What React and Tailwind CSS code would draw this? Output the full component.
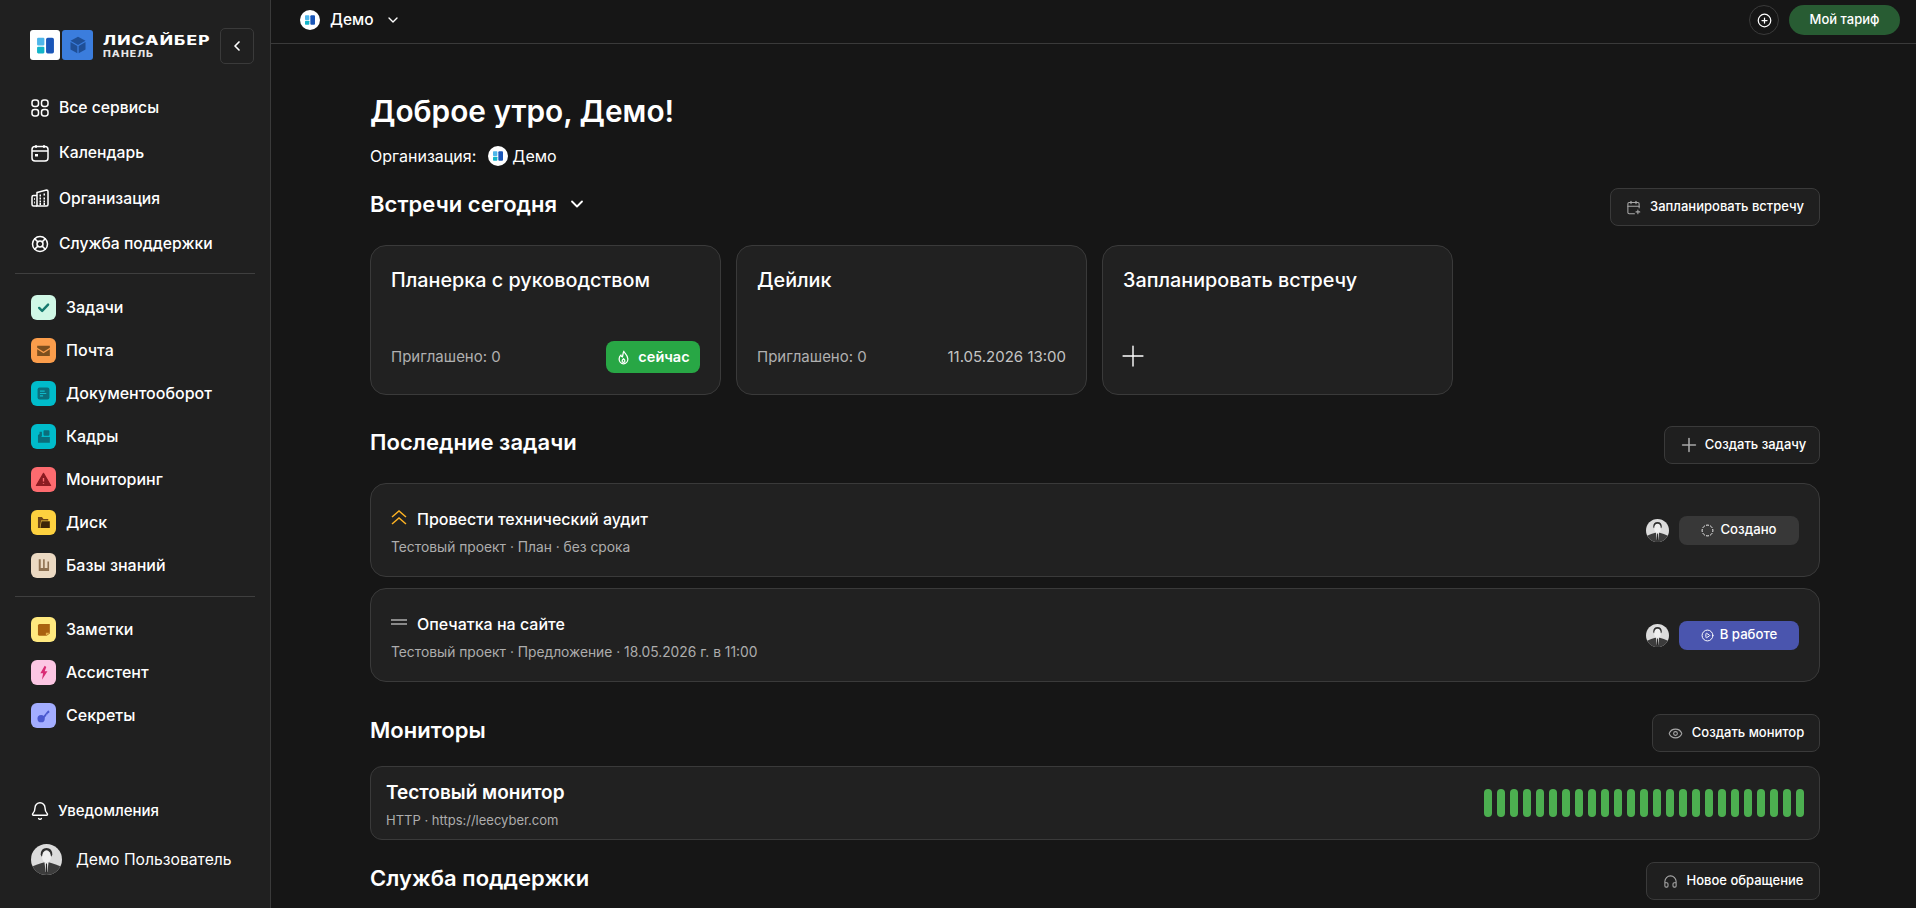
import React from "react";
import { ChevronLeft, ChevronDown, LifeBuoy, Bell, CalendarPlus, Plus, Eye, Headphones, CirclePlay, CircleDashed, CirclePlus } from "lucide-react";

const FONT = "font-['Inter','Noto_Sans',sans-serif]";

function OrgLogo({ className }) {
  return (
    <svg viewBox="0 0 24 24" className={className}>
      <rect x="4.5" y="5" width="6.5" height="7" rx="1" fill="#4fb6ea" />
      <rect x="4.5" y="13" width="6.5" height="6" rx="1" fill="#12b5c9" />
      <rect x="12.5" y="5" width="7" height="14" rx="1.5" fill="#1a56b8" />
    </svg>
  );
}

function OrgCircle({ size }) {
  return (
    <span className={`flex items-center justify-center rounded-full bg-white ${size}`}>
      <OrgLogo className="h-[80%] w-[80%]" />
    </span>
  );
}

function Avatar({ size }) {
  return (
    <span className={`block shrink-0 overflow-hidden rounded-full ${size}`}>
      <svg viewBox="0 0 32 32" className="h-full w-full">
        <rect width="32" height="32" fill="#dcdcdc" />
        <path d="M0 32V24 Q8 20 13 19 H19 Q24 20 32 24 V32Z" fill="#3c3c3c" />
        <path d="M10 11 Q10 4 16 4 Q22 4 22 11 L21 13 H11Z" fill="#2e2e2e" />
        <ellipse cx="16" cy="13" rx="4.6" ry="6.5" fill="#efefef" />
        <path d="M14 19 H18 L17 29 H15Z" fill="#f4f4f4" />
        <path d="M15.4 20 H16.6 L16.8 28 L16 30 L15.2 28Z" fill="#222" />
      </svg>
    </span>
  );
}

const Grid4 = (p) => (
  <svg viewBox="0 0 18 18" fill="none" stroke="currentColor" strokeWidth="1.5" {...p}>
    <rect x="1" y="1" width="6.5" height="6.5" rx="2.4" />
    <rect x="10.5" y="1" width="6.5" height="6.5" rx="2.4" />
    <rect x="1" y="10.5" width="6.5" height="6.5" rx="2.4" />
    <rect x="10.5" y="10.5" width="6.5" height="6.5" rx="2.4" />
  </svg>
);
const Cal = (p) => (
  <svg viewBox="0 0 18 18" fill="none" stroke="currentColor" strokeWidth="1.5" {...p}>
    <rect x="1" y="2.5" width="16" height="14.5" rx="3" />
    <path d="M1 7h16M5 1v3M13 1v3" />
    <rect x="4" y="10" width="3" height="2.5" fill="currentColor" stroke="none" />
  </svg>
);
const Org = (p) => (
  <svg viewBox="0 0 18 18" fill="none" stroke="currentColor" strokeWidth="1.5" {...p}>
    <path d="M6 3.5 L15.5 1 Q17 1 17 2.5 V15.5 Q17 17 15.5 17 H6Z" />
    <path d="M6 6.5 H2.5 Q1 6.5 1 8 V15.5 Q1 17 2.5 17 H6" />
    <path d="M8.5 6.5h1.5M12.5 5.5h1.5M8.5 9.5h1.5M12.5 9.5h1.5M8.5 12.5h1.5M12.5 12.5h1.5M8.5 15h1.5M12.5 15h1.5M3 10h.8M3 13.5h.8" strokeWidth="1.8" />
  </svg>
);
const Fire = (p) => (
  <svg viewBox="0 0 24 24" fill="none" stroke="currentColor" strokeWidth="2" strokeLinejoin="round" {...p}>
    <path d="M12.5 2c.5 3 6.5 5.500 6.500 12.500a7 7.500 0 0 1-14 0c0-3 1-5 3-6.500.2 2 1 3 2.200 3.200C11.200 8 11 5 12.500 2z" />
    <path d="M12 14c1.200 1 2.200 2 2.200 3.500a2.200 2.200 0 0 1-4.400 0c0-1.500 1.200-2.500 2.200-3.500z" />
  </svg>
);

const navTop = [
  ["Все сервисы", Grid4],
  ["Календарь", Cal],
  ["Организация", Org],
  ["Служба поддержки", LifeBuoy],
];

const i = {
  check: <path d="M6.500 12.500l3.800 3.800 7.500-8" fill="none" stroke="#14796e" strokeWidth="3" strokeLinecap="round" strokeLinejoin="round" />,
  mail: <><path d="M4 6h16v2.500l-8 5-8-5z" fill="#7c4f1e" /><path d="M4 10.500l8 5 8-5V19H4z" fill="#7c4f1e" /></>,
  doc: <><rect x="4.500" y="4.500" width="15" height="15" rx="2.500" fill="#0b6e7b" /><path d="M7.500 9h6M7.500 12h8M7.500 15h4" stroke="#11b9c9" strokeWidth="1.400" /></>,
  hr: <><path d="M5 10 L5 20 H20 V12.500 H9 V8z" fill="#0b6e7b" /><rect x="12" y="4" width="7.500" height="7" rx="1.200" fill="#0b6e7b" /><rect x="7" y="6" width="3" height="6" fill="#0b6e7b" /></>,
  warn: <><path d="M12 4.200 L21 19.500 H3z" fill="#8c1c22" stroke="#8c1c22" strokeWidth="1.500" strokeLinejoin="round" /><path d="M12 10v4.500M12 16.600v1" stroke="#ff6c70" strokeWidth="1.700" /></>,
  folder: <><path d="M5 5h5l2 2.500h6v2H9L7.500 19H5z" fill="#6b4417" /><path d="M9.500 10.500H20V19H8z" fill="#3d2508" /></>,
  book: <path d="M6 4h2.500v11h3V4h2v11H17V7h2v12H6z" fill="#8e7152" />,
  note: <><path d="M5 7 Q5 5 7 5 H20 V17 L16 20 H7 Q5 20 5 18z" fill="#a9620f" /><path d="M15 20v-4h5z" fill="#e4b04a" /></>,
  bolt: <path d="M13.500 3.500 L8 13 H11.500 L10 21 L17 10.500 H13.500 L15.500 5z" fill="#d92b74" />,
  key: <><circle cx="9" cy="16" r="4.600" fill="#4a58cf" /><path d="M11 14L18 5.500l1.800 2-1.500 1.600-1-.1.1 1.400-1.700.4-.2 1.600-2.700 2.800z" fill="#4a58cf" /></>,
};

const apps = [
  ["Задачи", "bg-[#d0f8e6]", i.check],
  ["Почта", "bg-[#fb9d4b]", i.mail],
  ["Документооборот", "bg-[#00bccb]", i.doc],
  ["Кадры", "bg-[#00bccb]", i.hr],
  ["Мониторинг", "bg-[#fd6b6f]", i.warn],
  ["Диск", "bg-[#fdd13f]", i.folder],
  ["Базы знаний", "bg-[#ebd9c2]", i.book],
];
const apps2 = [
  ["Заметки", "bg-[#ffe97f]", i.note],
  ["Ассистент", "bg-[#fcc6e3]", i.bolt],
  ["Секреты", "bg-[#a3adff]", i.key],
];

function AppRow({ item }) {
  const [label, bg, icon] = item;
  return (
    <div className="flex h-[43px] items-center gap-[10px] pl-[31px]">
      <span className={`flex h-[25px] w-[25px] items-center justify-center rounded-[6px] ${bg}`}>
        <svg viewBox="0 0 24 24" className="h-[19px] w-[19px]">{icon}</svg>
      </span>
      <span className="text-[16px] font-medium text-white">{label}</span>
    </div>
  );
}

function Sidebar() {
  return (
    <aside className="flex h-full w-[271px] shrink-0 flex-col border-r border-[#3a3a3a] bg-[#202020]">
      <div className="flex h-[85px] items-start pl-[30px] pt-[28px]">
        <div className="mt-[2px] flex items-center gap-[2px]">
          <span className="flex h-[30px] w-[30px] items-center justify-center rounded-[3px] bg-white">
            <OrgLogo className="h-[27px] w-[27px]" />
          </span>
          <span className="flex h-[30px] w-[31px] items-center justify-center rounded-[3px] bg-[#3b7ddd]">
            <svg viewBox="0 0 24 24" className="h-[20px] w-[20px]">
              <path d="M12 2l9 5-9 5-9-5z" fill="#1f4f96" />
              <path d="M3 8.500l8.200 4.600V22L3 17.500z" fill="#1f4f96" />
              <path d="M21 8.500l-8.200 4.600V22l8.200-4.500z" fill="#1f4f96" />
            </svg>
          </span>
        </div>
        <div className="ml-[10px] mt-[7px] flex w-[107px] flex-col text-white">
          <span className="origin-left scale-x-[1.33] text-[13px] leading-[11px] font-extrabold tracking-[0.9px] whitespace-nowrap">ЛИСАЙБЕР</span>
          <span className="mt-[3px] origin-left scale-x-[1.16] text-[9px] leading-[9px] font-extrabold tracking-[0.9px] text-[#e6e6e6]">ПАНЕЛЬ</span>
        </div>
        <button className="ml-[10px] flex h-[36px] w-[34px] items-center justify-center rounded-[5px] border border-[#3a3a3a] text-white">
          <ChevronLeft size={16} strokeWidth={2.5} />
        </button>
      </div>
      <nav className="flex flex-col pl-[31px]">
        {navTop.map(([label, Icon]) => (
          <div key={label} className="flex h-[45.4px] items-center gap-[10px] text-white">
            <Icon width={18} height={18} />
            <span className="text-[15.7px] font-medium">{label}</span>
          </div>
        ))}
      </nav>
      <div className="mx-[15px] mt-[6px] border-t border-[#3f3f3f]" />
      <div className="flex flex-col pt-[12px]">
        {apps.map((a) => <AppRow key={a[0]} item={a} />)}
      </div>
      <div className="mx-[15px] mt-[9px] border-t border-[#3f3f3f]" />
      <div className="flex flex-col pt-[11px]">
        {apps2.map((a) => <AppRow key={a[0]} item={a} />)}
      </div>
      <div className="mt-auto flex flex-col pb-[33px] pl-[31px]">
        <div className="flex items-center gap-[8px] text-white">
          <Bell size={20} strokeWidth={1.7} className="-ml-[1px]" />
          <span className="text-[15px] font-medium">Уведомления</span>
        </div>
        <div className="mt-[22px] flex items-center gap-[14px]">
          <Avatar size="h-[31px] w-[31px]" />
          <span className="text-[15.7px] text-white">Демо Пользователь</span>
        </div>
      </div>
    </aside>
  );
}

function OutlineBtn({ icon: Icon, children, width, iconSize = 14, gap }) {
  return (
    <button className={`flex h-[38px] shrink-0 items-center justify-center rounded-[8px] border border-[#3a3a3a] bg-[#1f1f1f] text-[13px] font-medium text-white ${width} ${gap}`}>
      <Icon size={iconSize} strokeWidth={1.7} className="text-[#a8a8a8]" />
      {children}
    </button>
  );
}

function SectionHead({ title, h, children, chevron }) {
  return (
    <div className={`flex items-center justify-between ${h}`}>
      <div className="mb-[6px] flex items-center gap-[10px]">
        <h2 className="text-[22px] font-semibold tracking-[0.05px] text-white">{title}</h2>
        {chevron && <ChevronDown size={20} strokeWidth={2.2} className="text-white" />}
      </div>
      {children}
    </div>
  );
}

function MeetingCard({ title, children }) {
  return (
    <div className="flex h-[150px] w-[351px] flex-col justify-between rounded-[16px] border border-[#3a3a3a] bg-[#212121] pb-[21px] pl-[20px] pr-[20px] pt-[21px]">
      <div className="text-[19.8px] leading-[26px] font-medium text-white">{title}</div>
      <div className="flex h-[32px] items-center justify-between">{children}</div>
    </div>
  );
}

function TaskCard({ icon, title, sub, status }) {
  return (
    <div className="flex h-[94px] items-center justify-between rounded-[16px] border border-[#3a3a3a] bg-[#212121] pl-[20px] pr-[20px]">
      <div className="flex flex-col pt-[5px]">
        <div className="flex h-[24px] items-center gap-[10px]">
          {icon}
          <span className="text-[16px] font-medium text-white">{title}</span>
        </div>
        <div className="mt-[6px] text-[13.8px] text-[#adadad]">{sub}</div>
      </div>
      <div className="flex items-center gap-[10px]">
        <Avatar size="h-[23px] w-[23px]" />
        {status}
      </div>
    </div>
  );
}

const bars = Array.from({ length: 25 }, (_, n) => n);

export default function App() {
  return (
    <div className={`flex h-[908px] w-full overflow-hidden bg-[#161616] ${FONT}`}>
      <Sidebar />
      <main className="flex min-w-0 flex-1 flex-col">
        <header className="flex h-[44px] shrink-0 items-center justify-between border-b border-[#3a3a3a] pb-[3px] pl-[29px] pr-[16px]">
          <div className="flex items-center gap-[10px] text-white">
            <OrgCircle size="h-[20px] w-[20px]" />
            <span className="text-[15.5px] font-medium">Демо</span>
            <ChevronDown size={16} strokeWidth={2} className="ml-[1px]" />
          </div>
          <div className="flex items-center gap-[10px]">
            <span className="flex h-[30px] w-[30px] items-center justify-center rounded-full border border-[#3a3a3a] text-white">
              <CirclePlus size={15} strokeWidth={2} />
            </span>
            <button className="flex h-[30px] w-[111px] items-center justify-center rounded-full bg-[#285c33] text-[13px] font-medium text-white">Мой тариф</button>
          </div>
        </header>
        <div className="ml-[99px] w-[1450px] self-start">
          <h1 className="mt-[47px] text-[29.8px] leading-[40px] font-semibold text-white">Доброе утро, Демо!</h1>
          <div className="mt-[13px] flex h-[24px] items-center text-[16px] text-white">
            <span>Организация:</span>
            <span className="ml-[12px] flex items-center gap-[4px]">
              <OrgCircle size="h-[20px] w-[20px]" />
              Демо
            </span>
          </div>
          <SectionHead title="Встречи сегодня" h="mt-[20px] h-[38px]" chevron>
            <OutlineBtn icon={CalendarPlus} iconSize={15} width="w-[210px]" gap="gap-[9px]">Запланировать встречу</OutlineBtn>
          </SectionHead>
          <div className="mt-[19px] flex gap-[15px]">
            <MeetingCard title="Планерка с руководством">
              <span className="text-[15px] text-[#b0b0b0]">Приглашено: 0</span>
              <span className="flex h-[32px] w-[94px] items-center justify-center gap-[7px] rounded-[8px] bg-[#28a745] text-[14.5px] font-semibold text-white">
                <Fire width={15} height={15} />
                сейчас
              </span>
            </MeetingCard>
            <MeetingCard title="Дейлик">
              <span className="text-[15px] text-[#b0b0b0]">Приглашено: 0</span>
              <span className="text-[15px] text-[#c4c4c4]">11.05.2026 13:00</span>
            </MeetingCard>
            <MeetingCard title="Запланировать встречу">
              <Plus size={34} strokeWidth={1} className="-ml-[7px] -mt-[3px] text-white" />
            </MeetingCard>
          </div>
          <SectionHead title="Последние задачи" h="mt-[31px] h-[38px]">
            <OutlineBtn icon={Plus} iconSize={22} width="w-[156px]" gap="gap-[5px]">Создать задачу</OutlineBtn>
          </SectionHead>
          <div className="mt-[19px] flex flex-col gap-[11px]">
            <TaskCard
              icon={
                <svg viewBox="0 0 16 15" fill="none" stroke="#fbb123" strokeWidth="1.500" className="-mt-[4px] h-[15px] w-[16px]">
                  <path d="M1 7L8 1l7 6M1 14l7-6 7 6" />
                </svg>
              }
              title="Провести технический аудит"
              sub="Тестовый проект · План · без срока"
              status={
                <span className="flex h-[29px] w-[120px] items-center justify-center gap-[6px] rounded-[8px] bg-[#383838] text-[13.2px] font-medium text-white">
                  <CircleDashed size={13} strokeWidth={1.8} />
                  Создано
                </span>
              }
            />
            <TaskCard
              icon={<span className="-mt-[4px] flex h-[6px] w-[16px] flex-col justify-between"><span className="h-[2px] bg-[#8a8a8a]" /><span className="h-[2px] bg-[#8a8a8a]" /></span>}
              title="Опечатка на сайте"
              sub="Тестовый проект · Предложение · 18.05.2026 г. в 11:00"
              status={
                <span className="flex h-[29px] w-[120px] items-center justify-center gap-[6px] rounded-[8px] bg-[#4a55ae] text-[13.2px] font-medium text-white">
                  <CirclePlay size={13} strokeWidth={1.8} />
                  В работе
                </span>
              }
            />
          </div>
          <SectionHead title="Мониторы" h="mt-[32px] h-[38px]">
            <OutlineBtn icon={Eye} iconSize={15} width="w-[168px]" gap="gap-[9px]">Создать монитор</OutlineBtn>
          </SectionHead>
          <div className="mt-[14px] flex h-[74px] items-center justify-between rounded-[12px] border border-[#3a3a3a] bg-[#212121] pl-[15px] pr-[15px]">
            <div className="flex flex-col pt-[2px]">
              <span className="text-[19px] leading-[26px] font-semibold text-white">Тестовый монитор</span>
              <span className="mt-[5px] text-[13px] leading-[18px] text-[#adadad]">HTTP · https://leecyber.com</span>
            </div>
            <div className="flex gap-[5px]">
              {bars.map((n) => <span key={n} className="h-[28px] w-[8px] rounded-full bg-[#4caf50]" />)}
            </div>
          </div>
          <SectionHead title="Служба поддержки" h="mt-[22px] h-[38px]">
            <OutlineBtn icon={Headphones} iconSize={15} width="w-[174px]" gap="gap-[9px]">Новое обращение</OutlineBtn>
          </SectionHead>
        </div>
      </main>
    </div>
  );
}
